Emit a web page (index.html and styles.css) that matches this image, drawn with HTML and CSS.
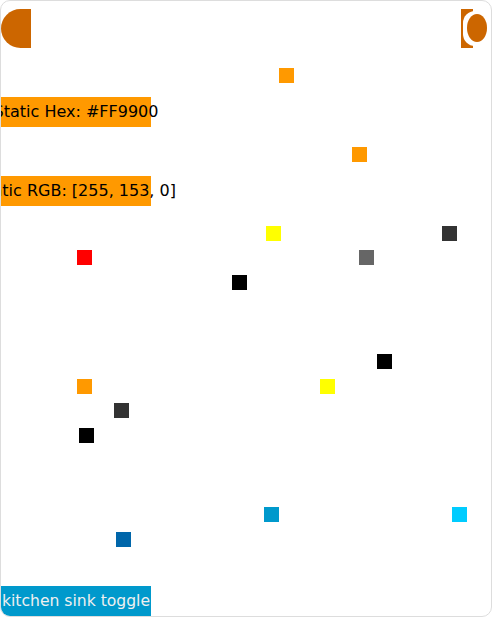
FILE: index.html
```html
<!DOCTYPE html>
<html>
<head>
<meta charset="utf-8">
<link rel="stylesheet" href="styles.css">
</head>
<body>
<div class="frame">
  <div class="top">
    <div class="half"></div>
    <div class="knob"><div class="knob-in"></div><div class="knob-dot"></div></div>
  </div>
  <div class="banner orange">Static Hex: #FF9900</div>
  <div class="banner orange">Static RGB: [255, 153, 0]</div>
  <div class="banner blue">kitchen sink toggle</div>

  <span class="sq" style="left:278px;top:67px;background:#ff9900"></span>
  <span class="sq" style="left:351px;top:146px;background:#ff9900"></span>
  <span class="sq" style="left:265px;top:225px;background:#ffff00"></span>
  <span class="sq" style="left:441px;top:225px;background:#333333"></span>
  <span class="sq" style="left:76px;top:249.3px;background:#ff0000"></span>
  <span class="sq" style="left:358px;top:249.3px;background:#666666"></span>
  <span class="sq" style="left:231px;top:274px;background:#000000"></span>
  <span class="sq" style="left:376px;top:353px;background:#000000"></span>
  <span class="sq" style="left:76px;top:378px;background:#ff9900"></span>
  <span class="sq" style="left:319px;top:378px;background:#ffff00"></span>
  <span class="sq" style="left:113px;top:402.3px;background:#333333"></span>
  <span class="sq" style="left:78px;top:427.3px;background:#000000"></span>
  <span class="sq" style="left:263px;top:506px;background:#0099cc"></span>
  <span class="sq" style="left:451px;top:506px;background:#00ccff"></span>
  <span class="sq" style="left:115px;top:531px;background:#0066aa"></span>
</div>
</body>
</html>
```
FILE: styles.css
```css
html, body {
  margin: 0;
  padding: 0;
  background: #ffffff;
}
body {
  font-family: "DejaVu Sans", sans-serif;
}
.frame {
  position: relative;
  box-sizing: border-box;
  width: 492px;
  height: 617px;
  border: 1px solid #dddddd;
  border-radius: 10px;
  overflow: hidden;
  display: flex;
  flex-direction: column;
}
.top {
  display: flex;
  justify-content: space-between;
  margin-top: 8px;
  height: 39px;
  padding-right: 4px;
}
.half {
  width: 30px;
  height: 39px;
  background: #cc6600;
  border-radius: 20px 0 0 20px / 20px 0 0 20px;
}
.knob {
  position: relative;
  width: 26px;
  height: 39px;
}
.knob::before {
  content: "";
  position: absolute;
  left: 0;
  top: 0;
  width: 12px;
  height: 39px;
  background: #cc6600;
}
.knob-in {
  position: absolute;
  left: 2px;
  top: 2px;
  width: 30px;
  height: 35px;
  background: #ffffff;
  border-radius: 12px;
}
.knob-dot {
  position: absolute;
  left: 6px;
  top: 5px;
  width: 20px;
  height: 28px;
  background: #cc6600;
  border-radius: 50%;
}
.banner {
  width: 150px;
  height: 30px;
  line-height: 30px;
  font-size: 16px;
  white-space: nowrap;
  display: flex;
  justify-content: center;
}
.orange {
  background: #ff9900;
  color: #000000;
  margin-top: 49px;
}
.blue {
  background: #0099cc;
  color: #f0f0f0;
  margin-top: auto;
  font-size: 15.6px;
}
.sq {
  position: absolute;
  width: 15px;
  height: 15px;
}
```
